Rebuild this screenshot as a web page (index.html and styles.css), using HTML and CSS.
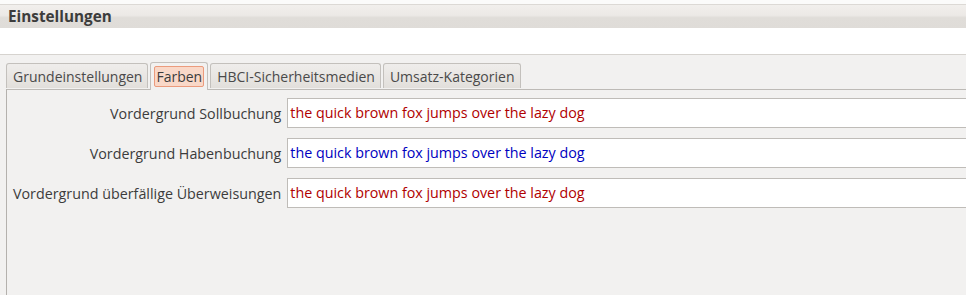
FILE: index.html
```html
<!DOCTYPE html>
<html>
<head>
<meta charset="utf-8">
<link rel="stylesheet" href="styles.css">
</head>
<body>
<div class="top-gap"></div>
<div class="titlebar">Einstellungen</div>
<div class="white-band"></div>
<div class="content">
  <div class="tabs">
    <div class="tab">Grundeinstellungen</div>
    <div class="tab active"><span class="focus">Farben</span></div>
    <div class="tab">HBCI-Sicherheitsmedien</div>
    <div class="tab">Umsatz-Kategorien</div>
  </div>
  <div class="panel">
    <div class="form">
      <div class="label">Vordergrund Sollbuchung</div>
      <div class="field red">the quick brown fox jumps over the lazy dog</div>
      <div class="label">Vordergrund Habenbuchung</div>
      <div class="field blue">the quick brown fox jumps over the lazy dog</div>
      <div class="label">Vordergrund überfällige Überweisungen</div>
      <div class="field red">the quick brown fox jumps over the lazy dog</div>
    </div>
  </div>
</div>
</body>
</html>
```
FILE: styles.css
```css
html, body {
  margin: 0;
  padding: 0;
  background: #ffffff;
  overflow: hidden;
  width: 966px;
  height: 295px;
  font-family: "Open Sans", "DejaVu Sans", sans-serif;
}
.top-gap {
  height: 5px;
  background: #fbfbfa;
  border-bottom: 1px solid #dcd9d5;
  box-sizing: border-box;
}
.titlebar {
  height: 23px;
  box-sizing: border-box;
  background: linear-gradient(#f1efec 0%, #ece9e6 45%, #e0ddd9 55%, #dfdcd8 100%);
  padding-left: 8px;
  font-weight: bold;
  font-size: 15.3px;
  line-height: 23px;
  color: #3c3c3c;
}
.white-band {
  height: 26px;
  background: #ffffff;
  border-bottom: 1px solid #d6d3cf;
}
.content {
  background: #f2f1f0;
  height: 240px;
  padding-top: 7px;
  box-sizing: border-box;
  display: flex;
  flex-direction: column;
}
.tabs {
  display: flex;
  align-items: flex-end;
  padding-left: 6px;
  gap: 2px;
  height: 27px;
  position: relative;
  z-index: 1;
}
.tab {
  height: 25px;
  box-sizing: border-box;
  border: 1px solid #c3c0bc;
  border-bottom: none;
  border-radius: 3px 3px 0 0;
  background: linear-gradient(#efedeb, #e2dfdb);
  padding: 0 5px 0 6px;
  font-size: 14px;
  color: #4a4a4a;
  line-height: 25px;
  margin-bottom: 1px;
  white-space: nowrap;
}
.tab.active {
  height: 28px;
  margin-bottom: -1px;
  background: #f2f1f0;
  padding: 3px 3px 0 3px;
  line-height: normal;
}
.focus {
  display: block;
  height: 21px;
  box-sizing: border-box;
  border: 1px solid #eb9b7d;
  border-radius: 2px;
  background: #f9d8c8;
  padding: 0 1px;
  line-height: 19px;
  color: #3c3c3c;
}
.panel {
  flex: 1;
  border-top: 1px solid #bdbab6;
  border-left: 1px solid #b4b1ad;
  margin-left: 6px;
  padding: 8px 0 0 6px;
}
.form {
  display: grid;
  grid-template-columns: auto 1fr;
  column-gap: 6px;
  row-gap: 10px;
  align-items: center;
}
.label {
  text-align: right;
  font-size: 14.3px;
  color: #3c3c3c;
  white-space: nowrap;
}
.field {
  height: 30px;
  box-sizing: border-box;
  border: 1px solid #bfbcb8;
  border-right: none;
  background: #ffffff;
  padding-left: 2px;
  font-size: 14.3px;
  line-height: 28px;
  white-space: nowrap;
}
.red { color: #b00000; }
.blue { color: #0000c0; }
```
